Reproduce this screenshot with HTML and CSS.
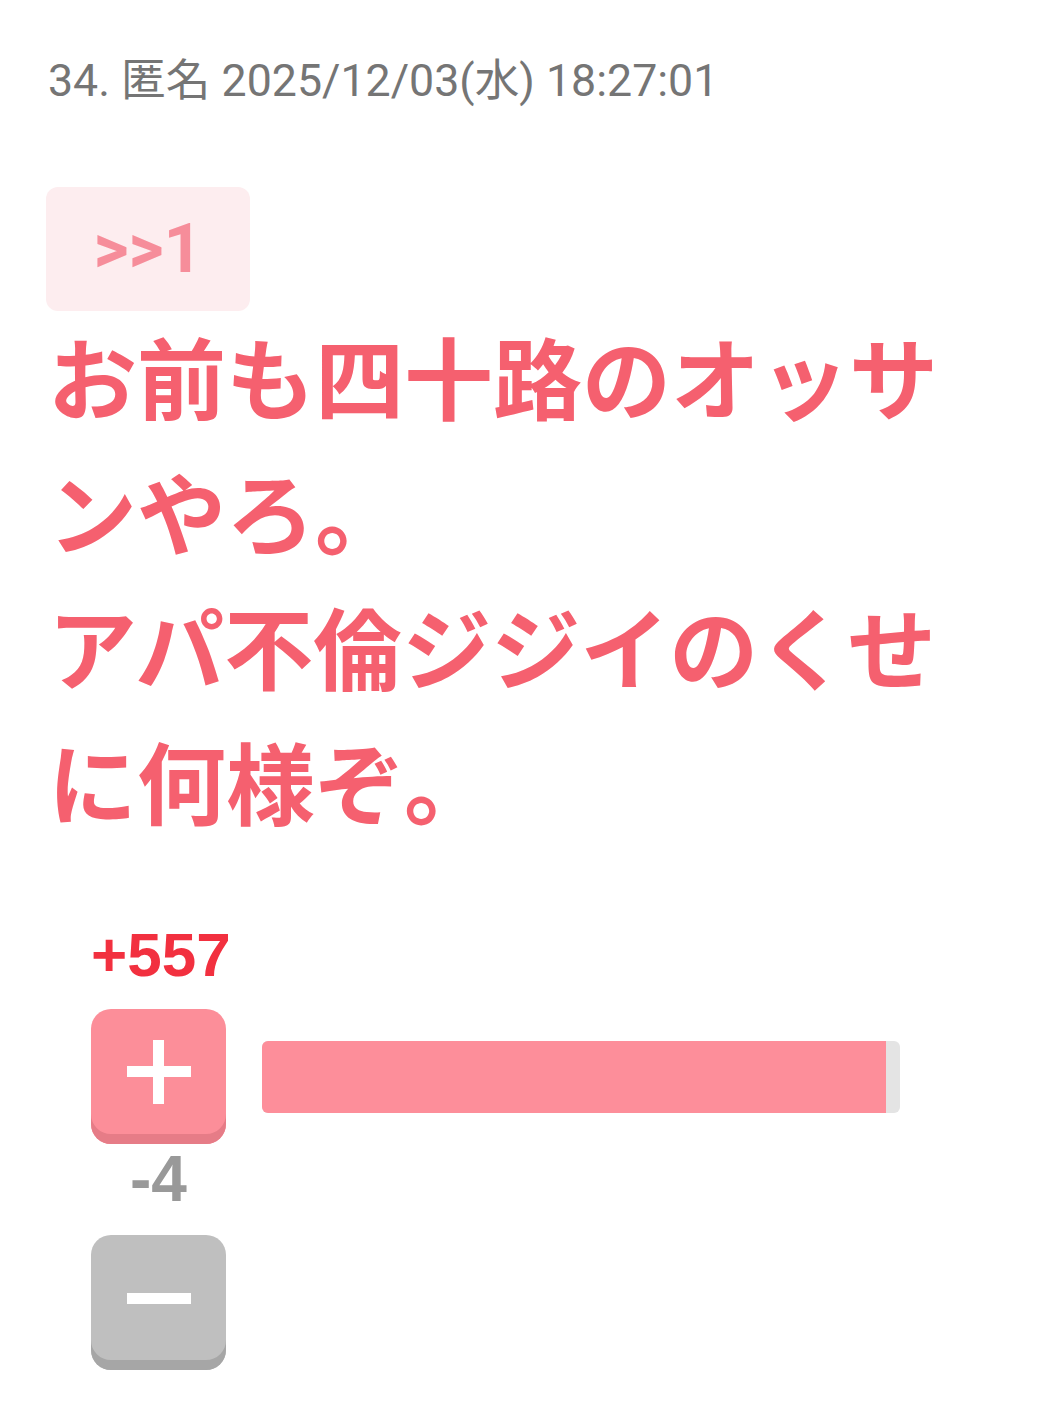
FILE: index.html
```html
<!DOCTYPE html>
<html lang="ja">
<head>
  <meta charset="UTF-8">
  <meta name="viewport" content="width=device-width, initial-scale=1.0">
  <title>34. 匿名</title>
  <link rel="stylesheet" href="styles.css">
</head>
<body>

  <div class="res">
    <div class="res-head">34. 匿名 2025/12/03(水) 18:27:01</div>

    <a href="#" class="anchor">&gt;&gt;1</a>
    <div class="res-body">お前も四十路のオッサンやろ。<br>アパ不倫ジジイのくせに何様ぞ。</div>

    <!-- 評価ボタン -->
    <div class="votes">
      <div class="count count-plus">+557</div>
      <div class="vote-row">
        <button class="vote-btn btn-plus"><span class="icon-plus"></span></button>
        <div class="bar"><div class="bar-fill" style="width: 97.8%;"></div></div>
      </div>
      <div class="count count-minus">-4</div>
      <div class="vote-row">
        <button class="vote-btn btn-minus"><span class="icon-minus"></span></button>
      </div>
    </div>
  </div>

</body>
</html>
```

FILE: styles.css
```css
body {
  margin: 0;
  padding: 0;
  background-color: #fff;
  font-family: Roboto, "Noto Sans CJK JP", sans-serif;
}
.res {
  padding: 51px 48px 40px;
}
.res-head {
  font-size: 44.7px;
  line-height: 60px;
  color: #757575;
}
.anchor {
  display: inline-flex;
  align-items: center;
  justify-content: center;
  width: 204px;
  height: 124px;
  margin-top: 76px;
  margin-left: -2px;
  box-sizing: border-box;
  background-color: #fdedef;
  border-radius: 12px;
  color: #f68d9a;
  font-weight: bold;
  font-size: 68px;
  text-decoration: none;
}
.res-body {
  font-family: "Noto Sans CJK JP", sans-serif;
  font-weight: bold;
  font-size: 89px;
  line-height: 135px;
  margin-top: -4px;
  color: #f5606f;
}

/* 評価 */
.votes {
  margin-top: 73px;
  padding-left: 43px;
}
.count {
  width: 135px;
  text-align: center;
  font-family: "Liberation Sans", Arial, sans-serif;
  font-weight: bold;
  font-size: 62px;
  line-height: 70px;
}
.count-plus {
  color: #f2303f;
  margin-bottom: 19px;
}
.count-minus {
  color: #999;
  font-size: 64px;
  margin-bottom: 21px;
}
.vote-row {
  display: flex;
  align-items: center;
  gap: 36px;
}
.vote-btn {
  position: relative;
  width: 135px;
  height: 135px;
  padding: 0;
  border: none;
  border-radius: 20px;
  cursor: pointer;
}
.btn-plus {
  background-color: #fc8e99;
  box-shadow: inset 0 -10px 0 #e67c87;
}
.btn-minus {
  background-color: #bfbfbf;
  box-shadow: inset 0 -10px 0 #a6a6a6;
}
.icon-plus, .icon-minus {
  position: absolute;
  left: 36px;
  width: 64px;
  height: 11px;
  background-color: #fff;
}
.icon-plus {
  top: 57px;
}
.icon-plus::after {
  content: "";
  position: absolute;
  left: 26px;
  top: -26px;
  width: 11px;
  height: 64px;
  background-color: #fff;
}
.icon-minus {
  top: 58px;
}
.bar {
  width: 638px;
  height: 72px;
  background-color: #e4e4e4;
  border-radius: 6px;
  overflow: hidden;
}
.bar-fill {
  height: 100%;
  background-color: #fd8e9a;
}
```
